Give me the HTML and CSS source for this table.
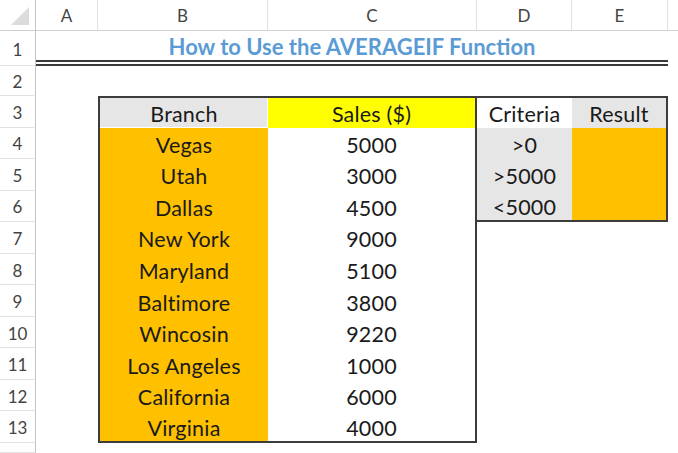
FILE: index.html
```html
<!DOCTYPE html>
<html lang="en">
<head>
<meta charset="utf-8">
<title>How to Use the AVERAGEIF Function</title>
<link rel="stylesheet" href="styles.css">
</head>
<body>
<div class="sheet">
  <div class="row hdr">
    <div class="corner"><svg width="18" height="18" viewBox="0 0 18 18"><polygon points="18,0 18,18 0,18" fill="#dcdcdc"/></svg></div>
    <div class="ch">A</div><div class="ch">B</div><div class="ch">C</div><div class="ch">D</div><div class="ch">E</div><div class="ch"></div>
  </div>
  <div class="row r1">
    <div class="rh">1</div>
    <div class="title">How to Use the AVERAGEIF Function</div>
    <div class="c"></div>
  </div>
  <div class="row r2">
    <div class="rh">2</div><div class="c"></div><div class="c"></div><div class="c"></div><div class="c"></div><div class="c"></div><div class="c"></div>
  </div>
  <div class="row rn">
    <div class="rh">3</div><div class="c"></div>
    <div class="c gray bl bt gapr">Branch</div>
    <div class="c yellow br bt">Sales ($)</div>
    <div class="c bt">Criteria</div>
    <div class="c gray bt br">Result</div>
    <div class="c"></div>
  </div>
  <div class="row rn">
    <div class="rh">4</div><div class="c"></div>
    <div class="c orange bl">Vegas</div><div class="c br">5000</div>
    <div class="c gray">&gt;0</div><div class="c orange br"></div><div class="c"></div>
  </div>
  <div class="row rn">
    <div class="rh">5</div><div class="c"></div>
    <div class="c orange bl">Utah</div><div class="c br">3000</div>
    <div class="c gray">&gt;5000</div><div class="c orange br"></div><div class="c"></div>
  </div>
  <div class="row rn">
    <div class="rh">6</div><div class="c"></div>
    <div class="c orange bl">Dallas</div><div class="c br">4500</div>
    <div class="c gray bb">&lt;5000</div><div class="c orange br bb"></div><div class="c"></div>
  </div>
  <div class="row rn">
    <div class="rh">7</div><div class="c"></div>
    <div class="c orange bl">New York</div><div class="c br">9000</div>
    <div class="c"></div><div class="c"></div><div class="c"></div>
  </div>
  <div class="row rn">
    <div class="rh">8</div><div class="c"></div>
    <div class="c orange bl">Maryland</div><div class="c br">5100</div>
    <div class="c"></div><div class="c"></div><div class="c"></div>
  </div>
  <div class="row rn">
    <div class="rh">9</div><div class="c"></div>
    <div class="c orange bl">Baltimore</div><div class="c br">3800</div>
    <div class="c"></div><div class="c"></div><div class="c"></div>
  </div>
  <div class="row rn">
    <div class="rh">10</div><div class="c"></div>
    <div class="c orange bl">Wincosin</div><div class="c br">9220</div>
    <div class="c"></div><div class="c"></div><div class="c"></div>
  </div>
  <div class="row rn">
    <div class="rh">11</div><div class="c"></div>
    <div class="c orange bl">Los Angeles</div><div class="c br">1000</div>
    <div class="c"></div><div class="c"></div><div class="c"></div>
  </div>
  <div class="row rn">
    <div class="rh">12</div><div class="c"></div>
    <div class="c orange bl">California</div><div class="c br">6000</div>
    <div class="c"></div><div class="c"></div><div class="c"></div>
  </div>
  <div class="row rn">
    <div class="rh">13</div><div class="c"></div>
    <div class="c orange bl bb">Virginia</div><div class="c br bb">4000</div>
    <div class="c"></div><div class="c"></div><div class="c"></div>
  </div>
  <div class="row rlast">
    <div class="rh"></div><div class="c"></div><div class="c"></div><div class="c"></div><div class="c"></div><div class="c"></div><div class="c"></div>
  </div>
</div>
</body>
</html>
```
FILE: styles.css
```css
* { box-sizing: border-box; }
html, body { margin: 0; padding: 0; background: #fff; }
body { width: 678px; height: 453px; overflow: hidden; font-family: "Lato", "Noto Sans", sans-serif; color: #1a1a1a; }

.sheet { display: flex; flex-direction: column; width: 678px; height: 453px; }

.row {
  display: grid;
  grid-template-columns: 36px 62px 170px 209px 95px 96px 1fr;
  flex: none;
}
.hdr { height: 31px; }
.r1 { height: 35px; }
.r2 { height: 30px; }
.rn { height: 31.55px; }
.rlast { flex: 1; }

.corner {
  border-right: 1px solid #c4c4c4;
  border-bottom: 1px solid #cfcfcf;
  display: flex;
  align-items: flex-end;
  justify-content: flex-end;
  padding: 0 6px 5px 0;
}
.corner svg { display: block; }

.ch {
  display: flex;
  align-items: center;
  justify-content: center;
  font-size: 17px;
  color: #444;
  border-right: 1px solid #e1e1e1;
  border-bottom: 1px solid #cfcfcf;
  padding-top: 1px;
}
.ch:last-child { border-right: none; }

.rh {
  display: flex;
  align-items: center;
  justify-content: center;
  font-size: 17px;
  color: #444;
  border-right: 1px solid #c4c4c4;
  border-bottom: 1px solid #e3e3e3;
  padding-top: 2px;
}

.title {
  grid-column: span 5;
  display: flex;
  align-items: center;
  justify-content: center;
  font-weight: 700;
  font-size: 22px;
  color: #5b9bd5;
  border-bottom: 6px double #3a3a3a;
  padding-top: 2px;
}

.c {
  display: flex;
  align-items: center;
  justify-content: center;
  font-size: 21.5px;
  letter-spacing: 0.2px;
  padding-top: 3px;
  white-space: nowrap;
}

.gray { background: #e7e6e6; }
.yellow { background: #ffff00; }
.orange { background: #ffc000; }

.bl { border-left: 2px solid #3c3c3c; }
.br { border-right: 2px solid #3c3c3c; }
.bt { border-top: 2px solid #3c3c3c; }
.bb { border-bottom: 2px solid #3c3c3c; }

.gapr { box-shadow: inset -1px -1px 0 #fff; }
```
